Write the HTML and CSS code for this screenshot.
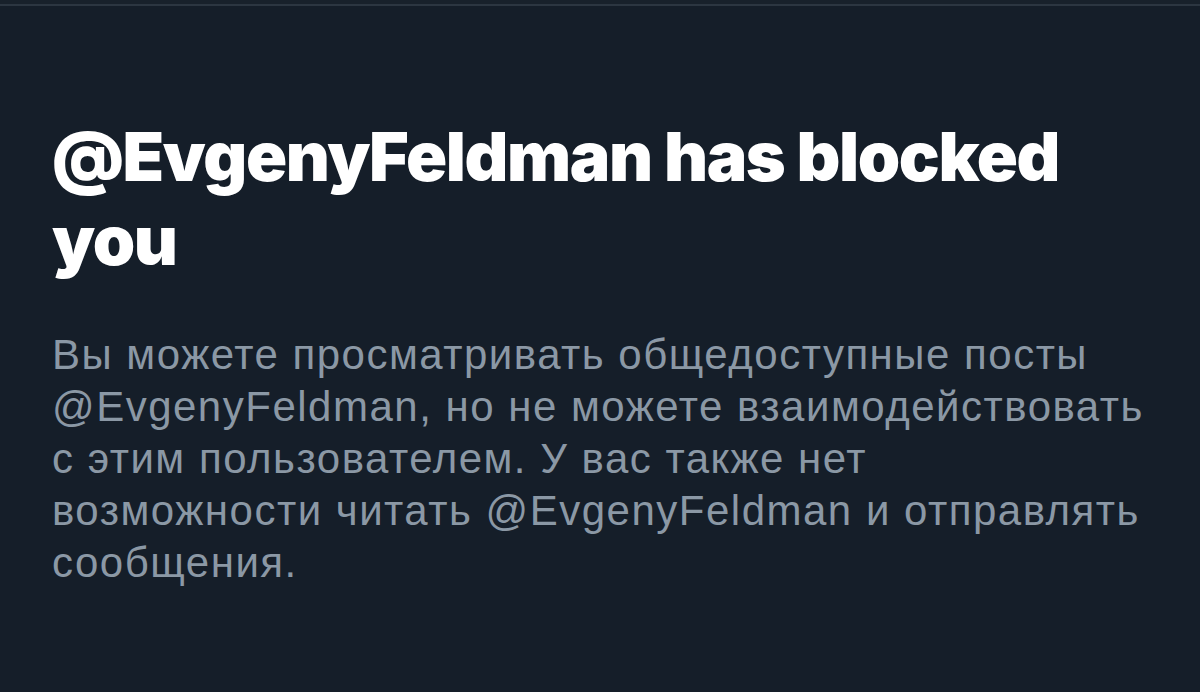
FILE: index.html
```html
<!DOCTYPE html>
<html lang="ru">
<head>
<meta charset="utf-8">
<link rel="stylesheet" href="styles.css">
</head>
<body>
<div class="topbar"></div>
<main class="blocked">
  <h1 class="title">@EvgenyFeldman has blocked<br>you</h1>
  <p class="desc">Вы можете просматривать общедоступные посты<br>@EvgenyFeldman, но не можете взаимодействовать<br>с этим пользователем. У вас также нет<br>возможности читать @EvgenyFeldman и отправлять<br>сообщения.</p>
</main>
</body>
</html>
```
FILE: styles.css
```css
html, body {
  margin: 0;
  padding: 0;
  background: #151e29;
  height: 100%;
  overflow: hidden;
}
.topbar {
  height: 4px;
  background: #18212b;
  border-bottom: 2px solid #2c3641;
}
.blocked {
  padding: 108px 20px 0 52px;
}
.title {
  margin: 0;
  font-family: Inter, "Liberation Sans", sans-serif;
  font-weight: 900;
  font-size: 68px;
  line-height: 84px;
  color: #ffffff;
  letter-spacing: -1.4px;
}
.desc {
  margin: 47px 0 0;
  font-family: "Liberation Sans", Arial, sans-serif;
  font-size: 42px;
  line-height: 52px;
  letter-spacing: 1.5px;
  color: #8b98a5;
  white-space: nowrap;
}
```
